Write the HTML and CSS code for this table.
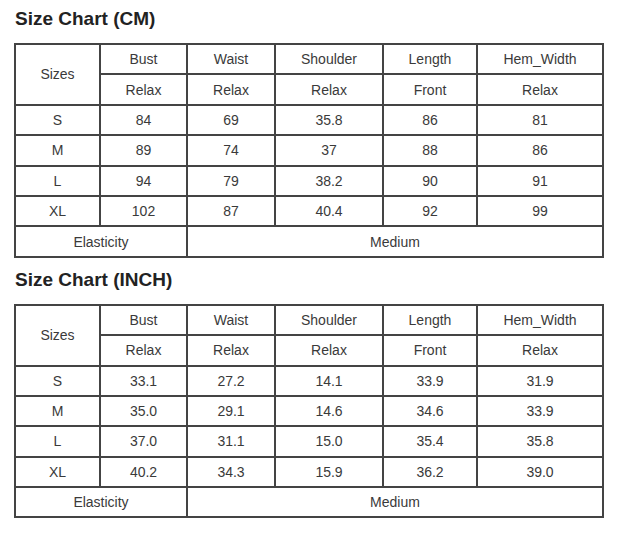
FILE: index.html
```html
<!DOCTYPE html>
<html>
<head>
<meta charset="utf-8">
<link rel="stylesheet" href="styles.css">
</head>
<body>
<div class="page">
  <h2 class="title">Size Chart (CM)</h2>
  <table class="chart">
    <colgroup>
      <col class="c1"><col class="c2"><col class="c3"><col class="c4"><col class="c5"><col class="c6">
    </colgroup>
    <tr><td rowspan="2">Sizes</td><td>Bust</td><td>Waist</td><td>Shoulder</td><td>Length</td><td>Hem_Width</td></tr>
    <tr><td>Relax</td><td>Relax</td><td>Relax</td><td>Front</td><td>Relax</td></tr>
    <tr><td>S</td><td>84</td><td>69</td><td>35.8</td><td>86</td><td>81</td></tr>
    <tr><td>M</td><td>89</td><td>74</td><td>37</td><td>88</td><td>86</td></tr>
    <tr><td>L</td><td>94</td><td>79</td><td>38.2</td><td>90</td><td>91</td></tr>
    <tr><td>XL</td><td>102</td><td>87</td><td>40.4</td><td>92</td><td>99</td></tr>
    <tr><td colspan="2">Elasticity</td><td colspan="4">Medium</td></tr>
  </table>
  <h2 class="title">Size Chart (INCH)</h2>
  <table class="chart">
    <colgroup>
      <col class="c1"><col class="c2"><col class="c3"><col class="c4"><col class="c5"><col class="c6">
    </colgroup>
    <tr><td rowspan="2">Sizes</td><td>Bust</td><td>Waist</td><td>Shoulder</td><td>Length</td><td>Hem_Width</td></tr>
    <tr><td>Relax</td><td>Relax</td><td>Relax</td><td>Front</td><td>Relax</td></tr>
    <tr><td>S</td><td>33.1</td><td>27.2</td><td>14.1</td><td>33.9</td><td>31.9</td></tr>
    <tr><td>M</td><td>35.0</td><td>29.1</td><td>14.6</td><td>34.6</td><td>33.9</td></tr>
    <tr><td>L</td><td>37.0</td><td>31.1</td><td>15.0</td><td>35.4</td><td>35.8</td></tr>
    <tr><td>XL</td><td>40.2</td><td>34.3</td><td>15.9</td><td>36.2</td><td>39.0</td></tr>
    <tr><td colspan="2">Elasticity</td><td colspan="4">Medium</td></tr>
  </table>
</div>
</body>
</html>
```

FILE: styles.css
```css
html, body {
  margin: 0;
  padding: 0;
  background: #fff;
}
.page {
  padding: 9px 0 0 14px;
  font-family: "Liberation Sans", Arial, sans-serif;
  color: #333;
}
.title {
  font-size: 19px;
  font-weight: bold;
  line-height: 20px;
  margin: 0 0 14px 1px;
  color: #222;
}
.chart {
  border-collapse: collapse;
  table-layout: fixed;
  width: 588px;
  margin: 0 0 12px 0;
  font-size: 14px;
}
.chart td {
  border: 2px solid #444;
  height: 30.4px;
  padding: 0;
  text-align: center;
  vertical-align: middle;
  box-sizing: border-box;
  color: #3a3a3a;
}
.c1 { width: 85px; }
.c2 { width: 87px; }
.c3 { width: 88px; }
.c4 { width: 108px; }
.c5 { width: 94px; }
.c6 { width: 126px; }
```
